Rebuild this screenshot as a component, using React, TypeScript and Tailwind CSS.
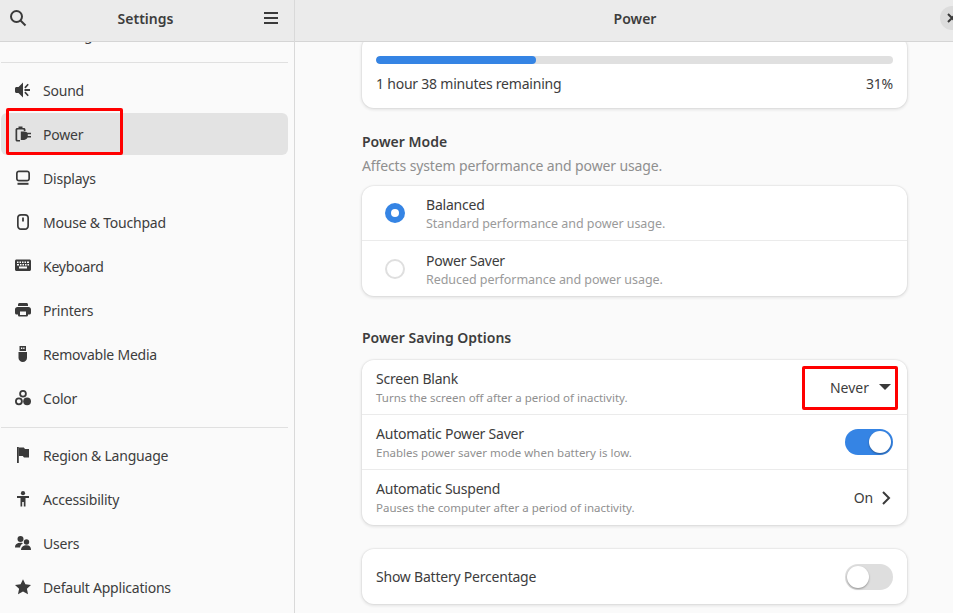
import type { ReactNode } from 'react'

const ink = '#3a3a3a'

function Icon({ children }: { children: ReactNode }) {
  return (
    <svg width="16" height="16" viewBox="0 0 16 16" fill={ink} className="shrink-0">
      {children}
    </svg>
  )
}

const icons: Record<string, ReactNode> = {
  sound: (
    <Icon>
      <path d="M8 .5v15L3.500 11H1.500C.7 11 0 10.300 0 9.500v-3C0 5.700.7 5 1.500 5h2z" />
      <path d="M9.500 7.100H15v1.800H9.500zM9.300 5.300l3.300-3.600 1.200 1.100-3.300 3.600zM9.300 10.700l1.200-1.100 3.300 3.600-1.200 1.100z" />
    </Icon>
  ),
  power: (
    <Icon>
      <path d="M3.500 .5h4V2h1.300c1 0 1.700.7 1.700 1.700V5H8.800V4c0-.3-.2-.5-.5-.5H2.700c-.3 0-.5.200-.5.500v9.500c0 .3.200.5.500.5H5v1.600H2.300C1.300 15.600.5 14.800.5 13.800V3.700C.5 2.700 1.300 2 2.300 2h1.200z" />
      <path d="M5.800 5.500h3.400c1.800 0 3 1 3.300 1.300H16v1.500h-3.200v1.800H16v1.500h-3.500c-.3.600-1.500 2.400-3.300 2.400H5.800z" />
    </Icon>
  ),
  displays: (
    <Icon>
      <path
        fillRule="evenodd"
        d="M4 .5h8c1.700 0 3 1.300 3 3v5c0 1.700-1.300 3-3 3H4c-1.700 0-3-1.300-3-3v-5c0-1.700 1.300-3 3-3zm0 1.700c-.8 0-1.300.5-1.300 1.300v5c0 .8.500 1.300 1.300 1.300h8c.8 0 1.300-.5 1.300-1.300v-5c0-.8-.5-1.300-1.300-1.300z"
      />
      <path d="M2.500 12.800h11v2h-11z" />
    </Icon>
  ),
  mouse: (
    <Icon>
      <path
        fillRule="evenodd"
        d="M6 0h4c2.500 0 4 1.500 4 3.700v8c0 2.500-1.500 4.300-4 4.300H6c-2.500 0-4-1.800-4-4.300v-8C2 1.500 3.500 0 6 0zm0 1.700c-1.400 0-2.300.8-2.300 2v8c0 1.500.9 2.600 2.300 2.600h4c1.400 0 2.300-1.100 2.300-2.600v-8c0-1.200-.9-2-2.300-2z"
      />
      <path d="M7.100 3.500h1.800v4H7.100z" />
    </Icon>
  ),
  keyboard: (
    <Icon>
      <path
        fillRule="evenodd"
        d="M1.500 1.500h13c.8 0 1.500.7 1.500 1.500v8.500c0 .8-.7 1.500-1.500 1.500h-13C.7 13 0 12.300 0 11.500V3c0-.8.700-1.500 1.500-1.500zM2 3.500V5h1.500V3.500zm2.500 0V5H6V3.500zm2.500 0V5h1.500V3.500zm2.500 0V5H11V3.500zm2.500 0V5h2V3.500zM2 6v1.500h2V6zm3 0v1.500h1.500V6zm2.500 0v1.500H9V6zM10 6v1.500h1.500V6zm2.500 0v1.500H14V6zM4 8.500v2h8v-2z"
      />
    </Icon>
  ),
  printers: (
    <Icon>
      <path d="M4.500 1h7C12.300 1 13 1.700 13 2.500V4H3V2.500C3 1.700 3.700 1 4.500 1z" />
      <path
        fillRule="evenodd"
        d="M2.500 5h11C15 5 16 6 16 7.500V11c0 .8-.7 1.500-1.500 1.500H13v.5c0 1-.7 1.500-1.500 1.500h-7C3.700 14.500 3 14 3 13v-.5H1.500C.7 12.500 0 11.800 0 11V7.500C0 6 1 5 2.500 5zM5 9.500v3.500h6V9.500z"
      />
    </Icon>
  ),
  media: (
    <Icon>
      <path fillRule="evenodd" d="M4.500 0h6.500v5H4.500zm1.500 1.500v1.500h1.300V1.500zm2.200 0v1.500h1.300V1.500z" />
      <path d="M3.500 6H12v6c0 2.300-1.900 4-4.200 4S3.500 14.300 3.500 12z" />
    </Icon>
  ),
  color: (
    <Icon>
      <path
        fillRule="evenodd"
        d="M8 0a3.800 3.800 0 1 1 0 7.600A3.800 3.800 0 0 1 8 0zm0 1.800a2 2 0 1 0 0 4 2 2 0 0 0 0-4z"
      />
      <path
        fillRule="evenodd"
        d="M3.900 7.400a3.900 3.900 0 1 1 0 7.800 3.900 3.900 0 0 1 0-7.800zm0 1.800a2.100 2.100 0 1 0 0 4.200 2.100 2.100 0 0 0 0-4.200z"
      />
      <circle cx="12.100" cy="11.300" r="3.900" />
    </Icon>
  ),
  region: (
    <Icon>
      <path d="M2 0h1.800v16H2z" />
      <path d="M3.800 .5h5L10 2h4v8.500H9L7.800 9H3.800z" />
    </Icon>
  ),
  accessibility: (
    <Icon>
      <circle cx="8" cy="2.200" r="2.100" />
      <path d="M2 5h12v1.900h-3.500v8.600H8.800V11H7.200v4.500H5.500V6.900H2z" />
    </Icon>
  ),
  users: (
    <Icon>
      <circle cx="5.500" cy="4" r="3" />
      <circle cx="11.500" cy="7" r="2.700" />
      <path d="M0 12c0-2.500 2-4.200 5.500-4.200 1 0 1.800.1 2.500.4-1.600.9-2.700 2.300-3 4.300H0z" />
      <path d="M6 15c0-3 2.300-4.800 5.500-4.800S16 12 16 15z" />
    </Icon>
  ),
  star: (
    <Icon>
      <path d="M8 .3l2.400 5 5.600.7-4.100 3.800 1.100 5.500L8 12.600l-5 2.700 1.100-5.500L0 6l5.600-.7z" />
    </Icon>
  ),
}

function NavRow({ icon, label, active }: { icon?: ReactNode; label: string; active?: boolean }) {
  return (
    <div
      className={`ml-px mb-[2px] flex h-[42px] w-[287px] shrink-0 items-center gap-3 rounded-md pl-[14px] ${
        active ? 'bg-[#e3e3e3]' : ''
      }`}
    >
      <div className="h-4 w-4 shrink-0">{icon}</div>
      <span className="text-[14px] tracking-[-0.22px] text-[#3d3d3d]">{label}</span>
    </div>
  )
}

function NavSeparator() {
  return <div className="my-[6px] ml-px h-px w-[287px] shrink-0 bg-[#e0e0e0]" />
}

function Switch({ on }: { on?: boolean }) {
  return (
    <div
      className={`flex h-[26px] w-12 items-center rounded-full px-[2px] ${
        on ? 'justify-end bg-[#3584e4]' : 'justify-start bg-[#dedede]'
      }`}
    >
      <div className="h-[22px] w-[22px] rounded-full bg-white shadow-[0_1px_2px_rgba(0,0,0,0.35)]" />
    </div>
  )
}

function Radio({ on }: { on?: boolean }) {
  if (on) {
    return (
      <div className="flex h-5 w-5 items-center justify-center rounded-full bg-[#3584e4]">
        <div className="h-2 w-2 rounded-full bg-white" />
      </div>
    )
  }
  return <div className="h-5 w-5 rounded-full border-2 border-[#dfdfdf]" />
}

function Card({ className = '', children }: { className?: string; children: ReactNode }) {
  return (
    <div
      className={`mx-auto w-[545px] shrink-0 rounded-xl bg-white shadow-[0_0_0_1px_rgba(0,0,0,0.03),0_1px_3px_1px_rgba(0,0,0,0.09)] ${className}`}
    >
      {children}
    </div>
  )
}

function SettingRow({
  title,
  subtitle,
  last,
  children,
}: {
  title: string
  subtitle: string
  last?: boolean
  children: ReactNode
}) {
  return (
    <div
      className={`flex h-[55px] items-center justify-between pl-[14px] pr-[14px] ${
        last ? '' : 'border-b border-[#ebebeb]'
      }`}
    >
      <div className="flex flex-col">
        <span className="text-[14px] leading-[19px] tracking-[-0.22px] text-[#3d3d3d]">{title}</span>
        <span className="pt-px text-[11.5px] leading-[17px] text-[#8f8f8f]">{subtitle}</span>
      </div>
      {children}
    </div>
  )
}

function RadioRow({ title, subtitle, on, last }: { title: string; subtitle: string; on?: boolean; last?: boolean }) {
  return (
    <div className={`flex h-[55px] items-center pl-[23px] ${last ? '' : 'border-b border-[#ebebeb]'}`}>
      <Radio on={on} />
      <div className="ml-[21px] flex flex-col pt-[2px]">
        <span className="text-[14px] leading-[19px] tracking-[-0.22px] text-[#3d3d3d]">{title}</span>
        <span className="text-[12.5px] leading-[19px] tracking-[-0.05px] text-[#9a9a9a]">{subtitle}</span>
      </div>
    </div>
  )
}

export default function App() {
  return (
    <div className="relative flex h-[613px] w-[953px] overflow-hidden bg-[#fafafa] font-['Noto_Sans',sans-serif] text-[#3d3d3d]">
      {/* sidebar */}
      <div className="flex w-[295px] shrink-0 flex-col border-r border-[#d9d9d9]">
        <div className="relative z-10 flex h-[42px] shrink-0 items-center justify-between border-b border-[#d5d5d5] bg-[#ebebeb] pb-[5px] pl-[9px] pr-4">
          <svg width="18" height="18" viewBox="0 0 18 18" fill="none" stroke={ink} strokeWidth="2">
            <circle cx="7.500" cy="7.500" r="5.500" />
            <path d="M11.500 11.500l5 5" />
          </svg>
          <span className="pt-px text-[14px] font-semibold">Settings</span>
          <svg width="14" height="12" viewBox="0 0 14 12" fill={ink}>
            <path d="M0 0h14v2H0zM0 5h14v2H0zM0 10h14v2H0z" />
          </svg>
        </div>
        <div className="flex min-h-0 flex-1 flex-col overflow-hidden">
          <div className="-mt-[29px] flex flex-col">
            <NavRow label="Sharing" />
            <div className="-mt-px" />
            <NavSeparator />
            <NavRow icon={icons.sound} label="Sound" />
            <NavRow icon={icons.power} label="Power" active />
            <NavRow icon={icons.displays} label="Displays" />
            <NavRow icon={icons.mouse} label="Mouse & Touchpad" />
            <NavRow icon={icons.keyboard} label="Keyboard" />
            <NavRow icon={icons.printers} label="Printers" />
            <NavRow icon={icons.media} label="Removable Media" />
            <NavRow icon={icons.color} label="Color" />
            <NavSeparator />
            <NavRow icon={icons.region} label="Region & Language" />
            <NavRow icon={icons.accessibility} label="Accessibility" />
            <NavRow icon={icons.users} label="Users" />
            <NavRow icon={icons.star} label="Default Applications" />
          </div>
        </div>
      </div>

      {/* main panel, runs past the right edge of the shot */}
      <div className="flex w-[679px] shrink-0 flex-col">
        <div className="flex h-[42px] shrink-0 items-center justify-center border-b border-[#d5d5d5] bg-[#ebebeb] pb-[4px] pl-px">
          <span className="text-[14px] font-semibold">Power</span>
        </div>
        <div className="flex min-h-0 flex-1 flex-col overflow-hidden">
          <div className="-mt-[6px] flex flex-col">
            <Card className="h-[72px] px-[14px] pt-5">
              <div className="h-2 overflow-hidden rounded-full bg-[#e0e0e0]">
                <div className="h-2 w-[31%] rounded-full bg-[#3584e4]" />
              </div>
              <div className="mt-[9px] flex items-center justify-between text-[14px] leading-[22px] tracking-[-0.22px]">
                <span>1 hour 38 minutes remaining</span>
                <span>31%</span>
              </div>
            </Card>

            <div className="mx-auto mt-[23px] w-[545px] text-[14px] font-semibold leading-[22px]">Power Mode</div>
            <div className="mx-auto mt-[2px] w-[545px] text-[14px] leading-[22px] tracking-[-0.12px] text-[#8f8f8f]">
              Affects system performance and power usage.
            </div>
            <Card className="mt-[9px]">
              <RadioRow title="Balanced" subtitle="Standard performance and power usage." on />
              <RadioRow title="Power Saver" subtitle="Reduced performance and power usage." last />
            </Card>

            <div className="mx-auto mt-[31px] w-[545px] text-[14px] font-semibold leading-[22px]">
              Power Saving Options
            </div>
            <Card className="mt-[11px]">
              <SettingRow title="Screen Blank" subtitle="Turns the screen off after a period of inactivity.">
                <div className="mr-[2px] flex items-center gap-[10px]">
                  <span className="text-[14px]">Never</span>
                  <svg width="12" height="6" viewBox="0 0 12 6" fill={ink}>
                    <path d="M0 0h12L6 6z" />
                  </svg>
                </div>
              </SettingRow>
              <SettingRow title="Automatic Power Saver" subtitle="Enables power saver mode when battery is low.">
                <Switch on />
              </SettingRow>
              <SettingRow title="Automatic Suspend" subtitle="Pauses the computer after a period of inactivity." last>
                <div className="mr-[2px] flex items-center gap-2">
                  <span className="text-[14px] tracking-[-0.22px]">On</span>
                  <svg width="10" height="14" viewBox="0 0 10 14" fill="none" stroke={ink} strokeWidth="2">
                    <path d="M2 1l6 6-6 6" />
                  </svg>
                </div>
              </SettingRow>
            </Card>

            <Card className="mt-6 flex h-[55px] items-center justify-between px-[14px]">
              <span className="text-[14px] tracking-[-0.22px]">Show Battery Percentage</span>
              <Switch />
            </Card>
          </div>
        </div>
      </div>

      {/* window close button, cut off by the shot */}
      <div className="absolute left-[940px] top-[6px] flex h-6 w-6 items-center justify-center rounded-full bg-[#dcdcdc]">
        <svg width="10" height="10" viewBox="0 0 10 10" fill="none" stroke={ink} strokeWidth="2">
          <path d="M1 1l8 8M9 1l-8 8" />
        </svg>
      </div>

      {/* red annotation boxes */}
      <div className="absolute left-[6px] top-[108px] h-[47px] w-[117px] rounded-[2px] border-[3px] border-[#ff0000]" />
      <div className="absolute left-[802px] top-[366px] h-[44px] w-[96px] rounded-[2px] border-[3px] border-[#ff0000]" />
    </div>
  )
}
